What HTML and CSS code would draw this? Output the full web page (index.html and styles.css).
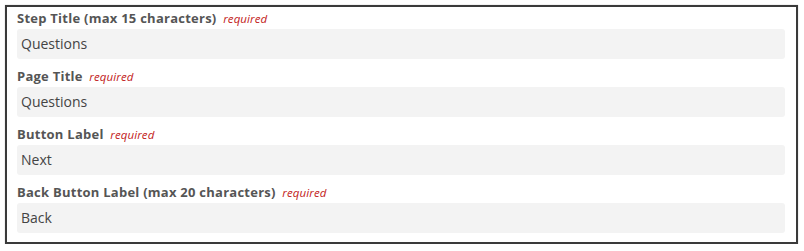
FILE: index.html
```html
<!DOCTYPE html>
<html>
<head>
<meta charset="utf-8">
<link rel="stylesheet" href="styles.css">
</head>
<body>
<div class="frame">
  <div class="field">
    <label class="label">Step Title (max 15 characters) <span class="req">required</span></label>
    <div class="input">Questions</div>
  </div>
  <div class="field">
    <label class="label">Page Title <span class="req">required</span></label>
    <div class="input">Questions</div>
  </div>
  <div class="field">
    <label class="label">Button Label <span class="req">required</span></label>
    <div class="input">Next</div>
  </div>
  <div class="field">
    <label class="label">Back Button Label (max 20 characters) <span class="req">required</span></label>
    <div class="input">Back</div>
  </div>
</div>
</body>
</html>
```

FILE: styles.css
```css
html, body {
  margin: 0;
  padding: 0;
  background: #ffffff;
}
body {
  padding: 5px 6px 0 5px;
  font-family: "Open Sans", "Liberation Sans", sans-serif;
}
.frame {
  border: 2px solid #3a3a3a;
  padding: 2px 11px 9px 10px;
  display: flex;
  flex-direction: column;
  gap: 8px;
  box-shadow: 0 0 1px rgba(0,0,0,0.3);
}
.field {
  display: flex;
  flex-direction: column;
  gap: 2px;
}
.label {
  font-size: 13px;
  font-weight: 700;
  line-height: 18px;
  height: 18px;
  letter-spacing: 0.25px;
  color: #555555;
}
.req {
  display: inline-block;
  margin-left: 3px;
  font-size: 11.5px;
  font-weight: 400;
  font-style: italic;
  line-height: 1;
  letter-spacing: 0.1px;
  color: #c21a1a;
}
.input {
  height: 30px;
  box-sizing: border-box;
  background: #f3f3f3;
  border-radius: 3px;
  padding: 0 4px;
  font-size: 14px;
  line-height: 30px;
  color: #444444;
}
```
